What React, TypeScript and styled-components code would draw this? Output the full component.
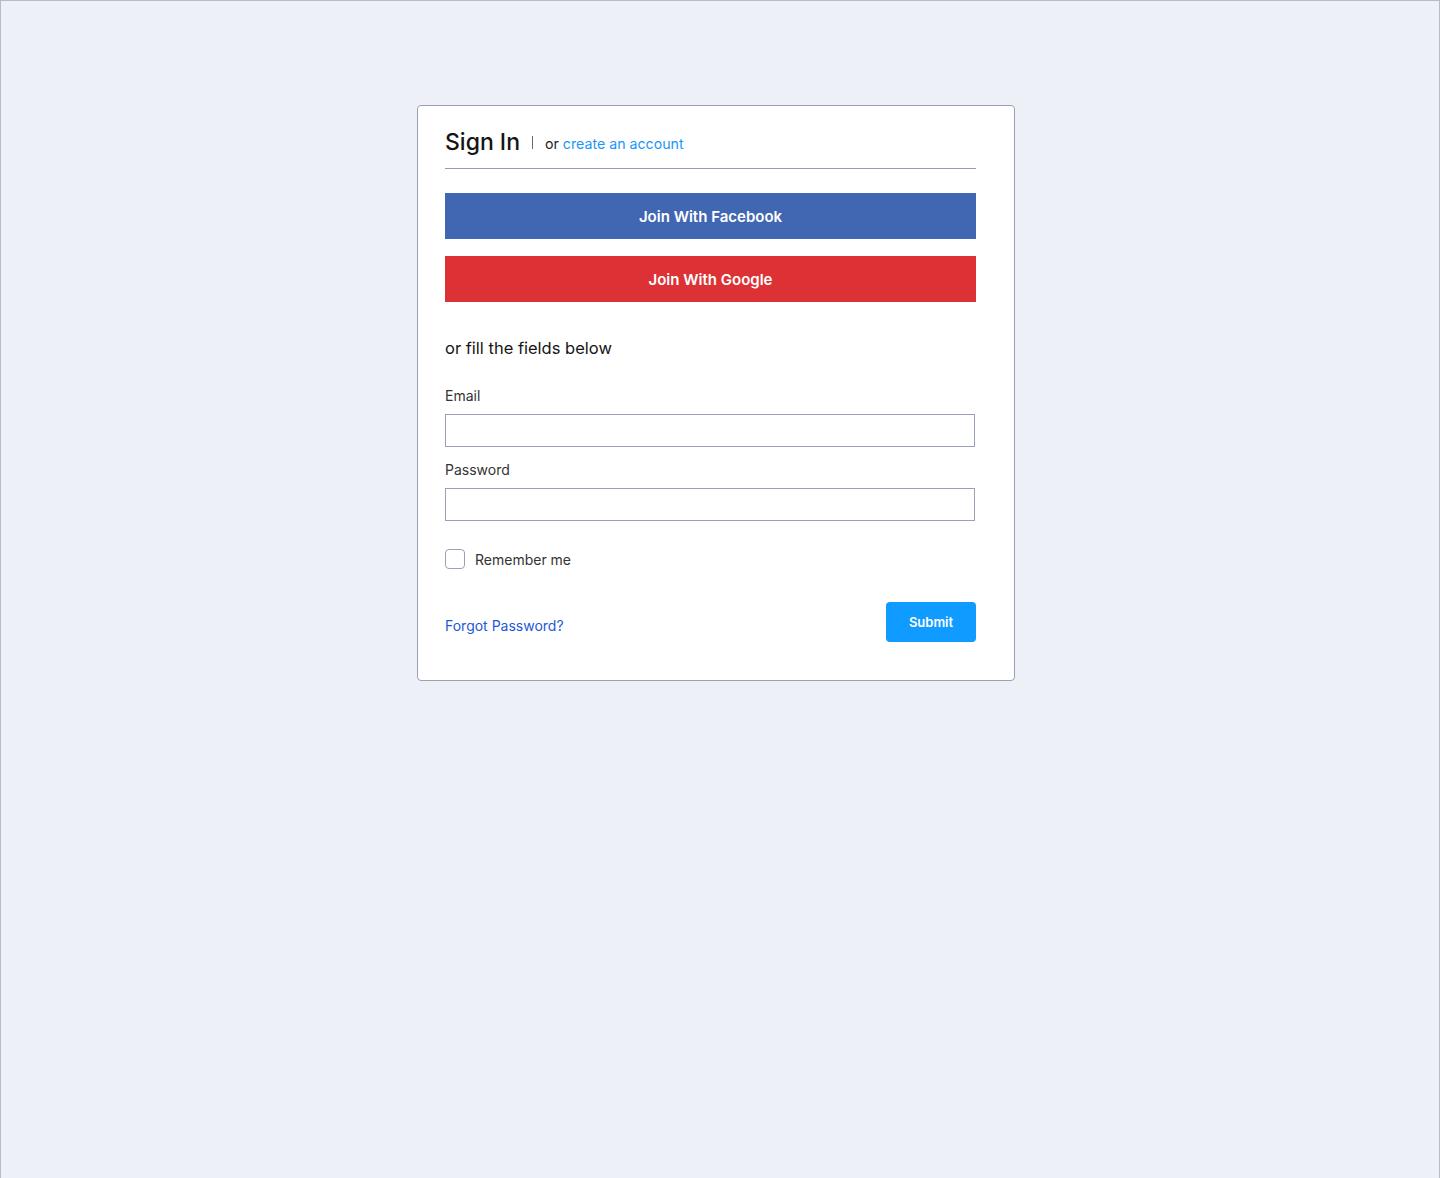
import React from "react";
import styled, { createGlobalStyle } from "styled-components";

const Global = createGlobalStyle`
  html, body { margin: 0; padding: 0; }
  body { font-family: "Inter", "Lato", "Liberation Sans", sans-serif; background: #edf0f7; }
  * { box-sizing: border-box; }
`;

const Page = styled.div`
  min-height: 1178px;
  border: 1px solid #b9bcc2;
  border-bottom: none;
  background: #edf0f7;
  padding-top: 104px;
  padding-left: 416px;
`;

const Card = styled.div`
  width: 598px;
  height: 576px;
  background: #fff;
  border: 1px solid #98a1b6;
  border-radius: 4px;
  padding: 22px 38px 0 27px;
  display: flex;
  flex-direction: column;
`;

const Header = styled.div`
  display: flex;
  align-items: center;
  padding-bottom: 12px;
  border-bottom: 1px solid #939db2;
`;

const Title = styled.h1`
  margin: 0;
  font-size: 23px;
  font-weight: 500;
  color: #151515;
`;

const Sep = styled.span`
  display: inline-block;
  width: 1px;
  height: 13px;
  background: #6b6b6b;
  margin: 0 12px 0 12px;
`;

const Small = styled.span`
  font-size: 14.2px;
  color: #222;
  padding-top: 2px;
  a { color: #1996f7; text-decoration: none; margin-left: 4px; }
`;

const SocialButton = styled.button<{ $bg: string }>`
  height: 46px;
  width: 100%;
  border: none;
  background: ${(p) => p.$bg};
  color: #fff;
  font-family: inherit;
  font-size: 15px;
  font-weight: 600;
  cursor: pointer;
`;

const Socials = styled.div`
  display: flex;
  flex-direction: column;
  gap: 17px;
  margin-top: 24px;
`;

const Fill = styled.p`
  margin: 36px 0 0;
  font-size: 16.5px;
  color: #151515;
`;

const Field = styled.div<{ $mt: number }>`
  display: flex;
  flex-direction: column;
  gap: 10px;
  margin-top: ${(p) => p.$mt}px;
  width: 530px;
`;

const Label = styled.label`
  font-size: 14px;
  color: #333;
`;

const Input = styled.input`
  height: 33px;
  width: 100%;
  border: 1px solid #98a1b6;
  outline: none;
  padding: 0 8px;
  font-size: 14px;
`;

const CheckRow = styled.label`
  display: flex;
  align-items: center;
  gap: 10px;
  margin-top: 28px;
  font-size: 14px;
  color: #333;
`;

const Box = styled.span`
  width: 20px;
  height: 20px;
  border: 1px solid #98a1b6;
  border-radius: 4px;
  display: inline-block;
`;

const Footer = styled.div`
  display: flex;
  justify-content: space-between;
  align-items: flex-start;
  margin-top: 33px;
`;

const Forgot = styled.a`
  margin-top: 15px;
  font-size: 14px;
  color: #2358d8;
  text-decoration: none;
`;

const Submit = styled.button`
  width: 90px;
  height: 40px;
  border: none;
  border-radius: 4px;
  background: #0f9bff;
  color: #fff;
  font-family: inherit;
  font-size: 13px;
  font-weight: 600;
`;

export default function App() {
  return (
    <>
      <Global />
      <Page>
        <Card>
          <Header>
            <Title>Sign In</Title>
            <Sep />
            <Small>
              or<a href="#">create an account</a>
            </Small>
          </Header>
          <Socials>
            <SocialButton $bg="#4267b2">Join With Facebook</SocialButton>
            <SocialButton $bg="#dc3236">Join With Google</SocialButton>
          </Socials>
          <Fill>or fill the fields below</Fill>
          <Field $mt={29}>
            <Label>Email</Label>
            <Input type="email" />
          </Field>
          <Field $mt={14}>
            <Label>Password</Label>
            <Input type="password" />
          </Field>
          <CheckRow>
            <Box />
            Remember me
          </CheckRow>
          <Footer>
            <Forgot href="#">Forgot Password?</Forgot>
            <Submit>Submit</Submit>
          </Footer>
        </Card>
      </Page>
    </>
  );
}
